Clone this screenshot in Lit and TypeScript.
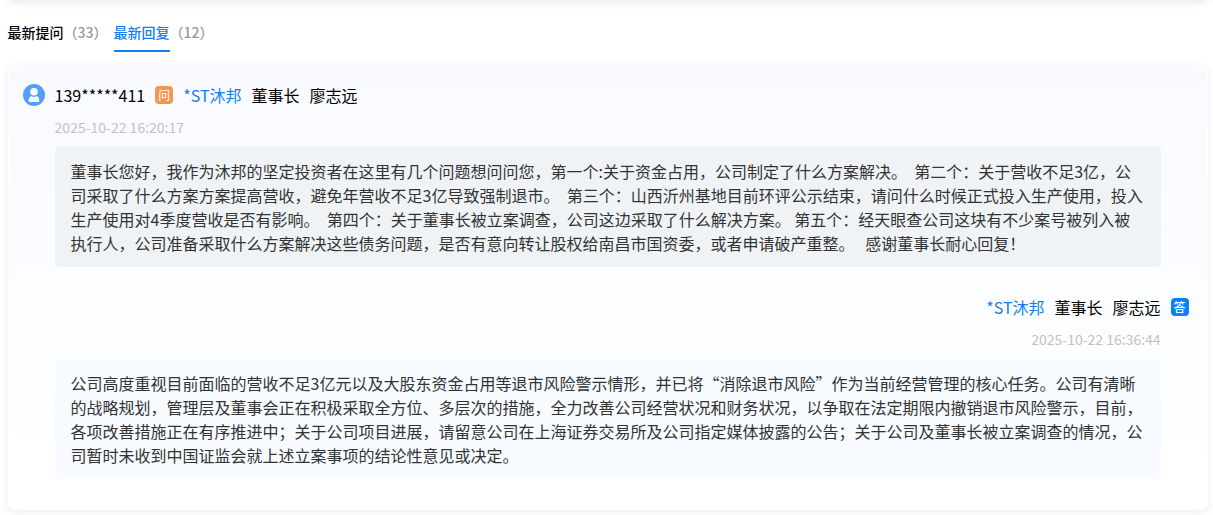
import { LitElement, html, css } from 'lit';
import { customElement } from 'lit/decorators.js';

@customElement('app-root')
export class AppRoot extends LitElement {
  render() {
    return html`
      <div class="previous"></div>
      <nav class="tabs">
        <div class="tab"><span class="label">最新提问</span><span class="count">（33）</span></div>
        <div class="tab active"><span class="label">最新回复</span><span class="count">（12）</span></div>
      </nav>
      <section class="card">
        <header class="question-head">
          <svg class="avatar" viewBox="0 0 22 22">
            <circle cx="11" cy="11" r="11" fill="#529ffa" />
            <circle cx="11" cy="7.8" r="3.8" fill="#fff" />
            <path d="M5.700 17.200v-.9c0-2.400 1.400-4.100 3-4.300.7.7 1.400 1 2.300 1s1.600-.3 2.300-1c1.600.2 3 1.900 3 4.300v.9q0 .8-.8.8h-9q-.8 0-.8-.8z" fill="#fff" />
          </svg>
          <span class="user">139*****411</span>
          <span class="badge ask">问</span>
          ${this.renderPerson()}
        </header>
        <time>2025-10-22 16:20:17</time>
        <p class="message question">董事长您好，我作为沐邦的坚定投资者在这里有几个问题想问问您，第一个:关于资金占用，公司制定了什么方案解决。&nbsp; 第二个：关于营收不足3亿，公司采取了什么方案方案提高营收，避免年营收不足3亿导致强制退市。&nbsp; 第三个：山西沂州基地目前环评公示结束，请问什么时候正式投入生产使用，投入生产使用对4季度营收是否有影响。&nbsp; 第四个：关于董事长被立案调查，公司这边采取了什么解决方案。 第五个：经天眼查公司这块有不少案号被列入被执行人，公司准备采取什么方案解决这些债务问题，是否有意向转让股权给南昌市国资委，或者申请破产重整。&nbsp;&nbsp; 感谢董事长耐心回复！</p>
        <header class="answer-head">
          ${this.renderPerson()}
          <span class="badge reply">答</span>
        </header>
        <time class="right">2025-10-22 16:36:44</time>
        <p class="message answer">公司高度重视目前面临的营收不足3亿元以及大股东资金占用等退市风险警示情形，并已将“消除退市风险”作为当前经营管理的核心任务。公司有清晰的战略规划，管理层及董事会正在积极采取全方位、多层次的措施，全力改善公司经营状况和财务状况，以争取在法定期限内撤销退市风险警示，目前，各项改善措施正在有序推进中；关于公司项目进展，请留意公司在上海证券交易所及公司指定媒体披露的公告；关于公司及董事长被立案调查的情况，公司暂时未收到中国证监会就上述立案事项的结论性意见或决定。</p>
      </section>
    `;
  }

  private renderPerson() {
    return html`
      <span class="stock">*ST沐邦</span>
      <span>董事长</span>
      <span>廖志远</span>
    `;
  }

  static styles = css`
    :host {
      display: block;
      height: 515px;
      overflow: hidden;
      background: #fff;
      color: #000;
      font: 16px/24px 'Noto Sans CJK SC', sans-serif;
    }

    .previous {
      height: 10px;
      margin: -10px 5px 0 7.6px;
      border-radius: 8px;
      box-shadow: 0 2px 8px rgba(47, 60, 116, 0.12);
    }

    .tabs {
      display: flex;
      gap: 6px;
      padding: 16px 7.6px 0;
      height: 52px;
      box-sizing: border-box;
      font-size: 14px;
      font-weight: 500;
    }

    .tab {
      display: flex;
      line-height: 32px;
    }

    .count {
      color: #999;
    }

    .active .label {
      padding-bottom: 2px;
      color: #127eef;
      border-bottom: 2px solid #127eef;
    }

    .card {
      box-sizing: border-box;
      height: 444px;
      margin: 14px 5.4px 0 7.6px;
      padding: 16px 46px 0;
      border: 1px solid #fff;
      border-radius: 8px;
      background: linear-gradient(#f8faff, #fff);
      box-shadow: 0 2px 8px rgba(47, 60, 116, 0.1);
    }

    .question-head,
    .answer-head {
      display: flex;
      align-items: center;
      gap: 10px;
      height: 24px;
    }

    .question-head {
      margin-left: -32px;
    }

    .avatar {
      width: 22px;
      height: 22px;
    }

    .badge {
      width: 18px;
      height: 18px;
      border-radius: 4px;
      color: #fff;
      font-size: 12px;
      line-height: 18px;
      text-align: center;
    }

    .ask {
      background: #f29752;
    }

    .reply {
      background: #0a80fa;
      font-weight: 500;
    }

    .stock {
      color: #127eef;
    }

    time {
      display: block;
      margin-top: 10px;
      color: #c2c2c2;
      font-size: 14px;
      line-height: 20px;
    }

    .right {
      text-align: right;
    }

    .message {
      box-sizing: border-box;
      height: 120px;
      margin: 10px 0 0;
      padding: 12px 16px;
      border-radius: 4px;
      color: #333;
    }

    .question {
      background: #f0f3f6;
    }

    .answer {
      background: #f7fbff;
    }

    .answer-head {
      justify-content: flex-end;
      margin: 28px -28px 0 0;
    }
  `;
}
